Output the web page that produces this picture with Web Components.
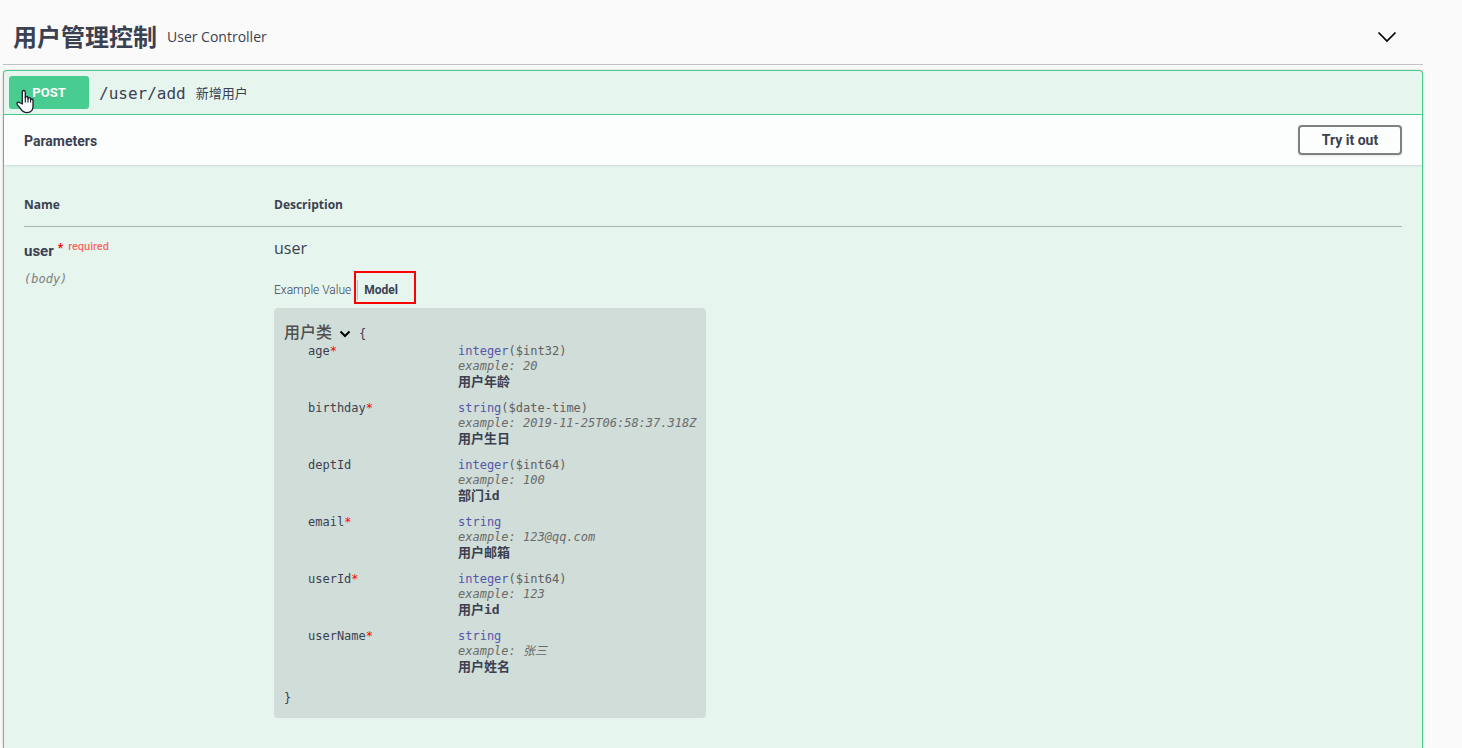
<!DOCTYPE html>
<html lang="zh-CN">
<head>
<meta charset="utf-8">
<meta name="viewport" content="width=device-width, initial-scale=1">
<title>User Controller</title>
<style>
  body {
    margin: 0;
    background: #fafafa;
    color: #3b4151;
    --sans: "Open Sans", "Noto Sans CJK SC", sans-serif;
    --ui: Roboto, "Noto Sans CJK SC", sans-serif;
    --mono: "DejaVu Sans Mono", "Noto Sans CJK SC", monospace;
    --green: #49cc90;
    font: 14px/20px var(--sans);
  }
</style>
</head>
<body>
<api-page>
  <api-tag name="用户管理控制" description="User Controller">
    <api-operation method="POST" path="/user/add" summary="新增用户">
      <api-parameters>
        <api-model name="用户类">
          <api-property name="age" type="integer" format="($int32)" example="20" required>用户年龄</api-property>
          <api-property name="birthday" type="string" format="($date-time)" example="2019-11-25T06:58:37.318Z" required>用户生日</api-property>
          <api-property name="deptId" type="integer" format="($int64)" example="100">部门id</api-property>
          <api-property name="email" type="string" example="123@qq.com" required>用户邮箱</api-property>
          <api-property name="userId" type="integer" format="($int64)" example="123" required>用户id</api-property>
          <api-property name="userName" type="string" example="张三" required>用户姓名</api-property>
        </api-model>
      </api-parameters>
    </api-operation>
  </api-tag>
</api-page>
<script>
class Base extends HTMLElement {
  connectedCallback() {
    if (this.shadowRoot) return;
    const t = document.createElement('template');
    t.innerHTML = '<style>*{box-sizing:border-box}' + this.css + '</style>' + this.html;
    this.attachShadow({ mode: 'open' }).append(t.content.cloneNode(true));
  }
  a(name) { return this.getAttribute(name) || ''; }
}

customElements.define('api-page', class extends Base {
  css = `:host{display:flex;flex-direction:column;box-sizing:border-box;min-height:100vh;padding:10px 39px 0 3px}
    ::slotted(*){flex:1}`;
  html = `<slot></slot>`;
});

customElements.define('api-tag', class extends Base {
  css = `:host{display:flex;flex-direction:column}
    header{display:flex;align-items:center;height:55px;padding:0 20px 1px 10px;border-bottom:1px solid rgba(59,65,81,.3);margin-bottom:5px}
    h2{margin:0;font:bold 24px/32px var(--sans)}
    p{flex:1;margin:0;padding-left:10px;font:14px/20px var(--sans)}
    button{border:0;background:none;padding:0;width:32px;height:32px;display:grid;place-items:center}
    ::slotted(*){flex:1}`;
  get html() {
    return `<header><h2>${this.a('name')}</h2><p>${this.a('description')}</p>
      <button aria-label="Collapse operations"><svg width="20" height="20" viewBox="0 0 20 20" fill="none" stroke="#000" stroke-width="1.7"><path d="M1.500 5.500l8.500 8.500L18.500 5.500"/></svg></button></header><slot></slot>`;
  }
});

customElements.define('api-operation', class extends Base {
  css = `:host{display:flex;flex-direction:column;box-sizing:border-box;border:1px solid var(--green);border-bottom:0;border-radius:4px 4px 0 0;background:#e6f5ee;box-shadow:0 0 3px rgba(0,0,0,.19)}
    .summary{display:flex;align-items:center;height:44px;padding:0 5px;border-bottom:1px solid var(--green)}
    .method{position:relative;width:80px;height:33px;border:0;border-radius:3px;background:var(--green);color:#fff;font:bold 13px/20px var(--ui);padding:0;text-shadow:0 1px 0 rgba(0,0,0,.1)}
    .cursor{position:absolute;left:6px;top:13px}
    .path{padding:2px 10px 0;font:16px/20px var(--mono)}
    .text{font:13px/20px var(--sans)}
    .bar{display:flex;align-items:center;justify-content:space-between;height:50px;padding:0 20px;background:#fcfefd;box-shadow:0 1px 2px rgba(0,0,0,.1)}
    h4{margin:0;padding-top:2px;font:bold 14px/20px var(--ui)}
    .try{width:104px;height:30px;border:2px solid gray;border-radius:4px;background:transparent;color:#3b4151;font:bold 14px/20px var(--ui);padding:0;box-shadow:0 1px 2px rgba(0,0,0,.1)}`;
  get html() {
    return `<div class="summary"><button class="method">${this.a('method')}
      <svg class="cursor" width="20" height="26" viewBox="0 0 20 26"><path d="M7.300 15V3.200c0-1 .6-1.700 1.500-1.700s1.500.7 1.500 1.700v5.700c0-.9.6-1.400 1.400-1.400s1.300.6 1.300 1.400v1c.1-.8.600-1.200 1.300-1.200.8 0 1.300.6 1.300 1.400v.8c.1-.6.500-.9 1.100-.9.8 0 1.300.6 1.300 1.400v6.200c0 3.800-2.400 6-6 6-3.100 0-4.700-1.200-6.300-3.700L2.300 15.600c-.5-.8-.4-1.700.3-2.200.8-.5 1.600-.3 2.300.3z" fill="#fff" stroke="#1b1d2b" stroke-width="1.300" stroke-linejoin="round"/><path d="M10.300 8.500v5M13 9.500v4M15.600 10.500v3" stroke="#1b1d2b" stroke-width="1.100" fill="none"/></svg></button>
      <span class="path">${this.a('path')}</span><span class="text">${this.a('summary')}</span></div>
      <div class="bar"><h4>Parameters</h4><button class="try">Try it out</button></div><slot></slot>`;
  }
});

customElements.define('api-parameters', class extends Base {
  css = `:host{display:block;padding:20px 20px 30px}
    table{width:100%;border-collapse:collapse}
    th{height:41px;padding:0;text-align:left;font:bold 12px/18px var(--sans);border-bottom:1px solid rgba(59,65,81,.2)}
    td{padding:10px 0 0;vertical-align:top}
    .name{width:250px}
    .param{display:flex;padding-top:4px;font:bold 15px/20px var(--ui)}
    .star{color:#f00;font:bold 12px/14px var(--ui);padding:0 5px 0 4px}
    .req{color:rgba(255,0,0,.6);font:500 11px/12px var(--ui)}
    .in{padding-top:10px;color:gray;font:italic 12px/16px var(--mono)}
    .desc{margin:0;font:16px/22px var(--sans);color:#3b4151}
    .tabs{display:flex;align-items:center;padding:21px 0 8px}
    .tabs button{position:relative;border:0;background:none;padding:0;color:#3b4151;font:300 12px/20px var(--ui)}
    .tabs button+button{font-weight:bold;margin-left:6px;padding-left:6px;border-left:1px solid rgba(0,0,0,.2)}
    .tabs .mark{position:absolute;left:-4px;top:-9px;width:62px;height:33px;border:2px solid #f00}`;
  html = `<table><thead><tr><th class="name">Name</th><th>Description</th></tr></thead>
    <tbody><tr><td><div class="param">user<span class="star">*</span><span class="req">required</span></div><div class="in">(body)</div></td>
    <td><p class="desc">user</p><div class="tabs"><button>Example Value</button><button>Model<span class="mark"></span></button></div><slot></slot></td></tr></tbody></table>`;
});

customElements.define('api-model', class extends Base {
  css = `:host{display:block;box-sizing:border-box;width:fit-content;padding:12px 10px;border-radius:4px;background:#d0ddd8;font:12px/16px var(--mono)}
    .head{display:flex;align-items:center;height:24px}
    .head b{font:500 16px/22px var(--sans);color:#505050}
    svg{margin:4px 7px 0 6px}
    .open{padding-top:4px}
    .props{padding:0 0 4px 24px}`;
  get html() {
    return `<div class="head"><b>${this.a('name')}</b><svg width="14" height="14" viewBox="0 0 14 14" fill="none" stroke="#000" stroke-width="2"><path d="M2.500 4.500L7 9l4.500-4.500"/></svg><span class="open">{</span></div>
      <div class="props"><slot></slot></div><div>}</div>`;
  }
});

customElements.define('api-property', class extends Base {
  css = `:host{display:grid;grid-template-columns:150px auto;padding-bottom:12px;font:12px/15px var(--mono)}
    .star{color:#f00}
    .type{color:#55a}
    .format{color:#606060}
    .ex{font-style:italic;color:#6b6b6b}
    .ex,.text{height:15px;white-space:nowrap}
    .text{font:bold 13px/15px var(--mono)}`;
  get html() {
    return `<div>${this.a('name')}${this.hasAttribute('required') ? '<span class="star">*</span>' : ''}</div>
      <div><div><span class="type">${this.a('type')}</span><span class="format">${this.a('format')}</span></div><div class="ex">example: ${this.a('example')}</div><div class="text"><slot></slot></div></div>`;
  }
});
</script>
</body>
</html>
